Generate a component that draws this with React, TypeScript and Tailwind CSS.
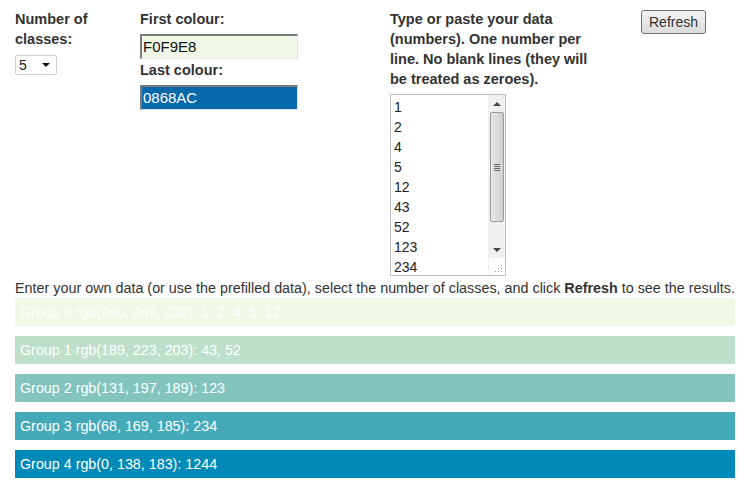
import React from "react";

const groups = [
  { bg: "bg-[rgb(240,249,232)]", label: "Group 0 rgb(240, 249, 232): 1, 2, 4, 5, 12" },
  { bg: "bg-[rgb(189,223,203)]", label: "Group 1 rgb(189, 223, 203): 43, 52" },
  { bg: "bg-[rgb(131,197,189)]", label: "Group 2 rgb(131, 197, 189): 123" },
  { bg: "bg-[rgb(68,169,185)]", label: "Group 3 rgb(68, 169, 185): 234" },
  { bg: "bg-[rgb(0,138,183)]", label: "Group 4 rgb(0, 138, 183): 1244" },
];

// only the lines that fit in the box are drawn; the last one (1244) is scrolled out of view
const visibleData = ["1", "2", "4", "5", "12", "43", "52", "123", "234"];

const FakeScrollbar: React.FC = () => (
  <div className="absolute right-0 top-0 w-[17px] h-full flex flex-col bg-[#f0f0f0] border-l border-[#f0f0f0]">
    {/* up arrow */}
    <div className="h-[17px] flex items-center justify-center">
      <div className="w-0 h-0 border-l-[4px] border-r-[4px] border-b-[4px] border-l-transparent border-r-transparent border-b-[#444]" />
    </div>
    {/* thumb */}
    <div className="mx-[1px] h-[110px] rounded-[2px] border border-[#9a9a9a] bg-gradient-to-r from-[#e8e8e8] via-[#dcdcdc] to-[#cfcfcf] flex items-center justify-center">
      <div className="flex flex-col gap-[1px]">
        <div className="w-[6px] h-[1px] bg-[#666]" />
        <div className="w-[6px] h-[1px] bg-[#666]" />
        <div className="w-[6px] h-[1px] bg-[#666]" />
        <div className="w-[6px] h-[1px] bg-[#666]" />
      </div>
    </div>
    <div className="flex-1" />
    {/* down arrow */}
    <div className="h-[17px] flex items-center justify-center">
      <div className="w-0 h-0 border-l-[4px] border-r-[4px] border-t-[4px] border-l-transparent border-r-transparent border-t-[#444]" />
    </div>
    {/* resize corner */}
    <div className="h-[17px] bg-white relative">
      <svg className="absolute right-[2px] bottom-[2px]" width="8" height="8" viewBox="0 0 8 8">
        <rect x="6" y="0" width="1" height="1" fill="#999" />
        <rect x="3" y="3" width="1" height="1" fill="#999" />
        <rect x="6" y="3" width="1" height="1" fill="#999" />
        <rect x="0" y="6" width="1" height="1" fill="#999" />
        <rect x="3" y="6" width="1" height="1" fill="#999" />
        <rect x="6" y="6" width="1" height="1" fill="#999" />
      </svg>
    </div>
  </div>
);

const App: React.FC = () => {
  return (
    <div className="w-[747px] h-[493px] bg-white text-[#333] font-['Liberation_Sans',Arial,sans-serif] pl-[15px] pr-[10px] overflow-hidden">
      {/* Controls */}
      <div className="flex pt-[9px]">
        <div className="w-[125px]">
          <p className="font-bold text-[14.5px] leading-[20px] w-[95px]">Number of classes:</p>
          <div className="mt-[6px] w-[42px] h-[20px] border border-[#cfcfcf] rounded-[2px] bg-white flex items-center justify-between pl-[3px] pr-[6px] text-[14px] text-[#222]">
            <span>5</span>
            <div className="w-0 h-0 border-l-[4px] border-r-[4px] border-t-[4px] border-l-transparent border-r-transparent border-t-[#111]" />
          </div>
        </div>

        <div className="w-[250px]">
          <p className="font-bold text-[14.5px] leading-[20px]">First colour:</p>
          <div className="mt-[5px] w-[158px] h-[25px] bg-[#F0F9E8] border-t-2 border-l-2 border-t-[#7a7a7a] border-l-[#7a7a7a] border-b border-r border-b-[#e5e5e5] border-r-[#e5e5e5] text-[15px] leading-[22px] pl-[1px] text-[#111]">
            F0F9E8
          </div>
          <p className="font-bold text-[14.5px] leading-[20px] mt-[1px]">Last colour:</p>
          <div className="mt-[5px] w-[158px] h-[25px] bg-[#0868AC] border-t-2 border-l-2 border-t-[#7a7a7a] border-l-[#7a7a7a] border-b border-r border-b-[#e5e5e5] border-r-[#e5e5e5] text-[15px] leading-[22px] pl-[1px] text-white">
            0868AC
          </div>
        </div>

        <div className="w-[251px]">
          <p className="font-bold text-[14.5px] leading-[20px] w-[210px]">
            Type or paste your data (numbers). One number per line. No blank lines (they will be treated as zeroes).
          </p>
          <div className="relative mt-[5px] w-[116px] h-[182px] border border-[#bdbdbd] bg-white overflow-hidden">
            <div className="pl-[3px] pt-[2px] text-[14px] leading-[20px] text-[#222]">
              {visibleData.map((d) => (
                <div key={d}>{d}</div>
              ))}
            </div>
            <FakeScrollbar />
          </div>
        </div>

        <div className="pt-[1px]">
          <button className="h-[24px] px-[7px] border border-[#707070] rounded-[3px] bg-gradient-to-b from-[#f3f3f3] to-[#dcdcdc] text-[14px] text-[#333] leading-[20px]">
            Refresh
          </button>
        </div>
      </div>

      {/* Instructions */}
      <p className="text-[14.35px] leading-[20px] mt-[2px] whitespace-nowrap">
        Enter your own data (or use the prefilled data), select the number of classes, and click <b>Refresh</b> to see the results.
      </p>

      {/* Results */}
      <div className="mr-[2px] flex flex-col gap-[10px]">
        {groups.map((g) => (
          <div key={g.label} className={`${g.bg} h-[28px] leading-[28px] pl-[5px] text-[14.3px] text-white`}>
            {g.label}
          </div>
        ))}
      </div>
    </div>
  );
};

export default App;
